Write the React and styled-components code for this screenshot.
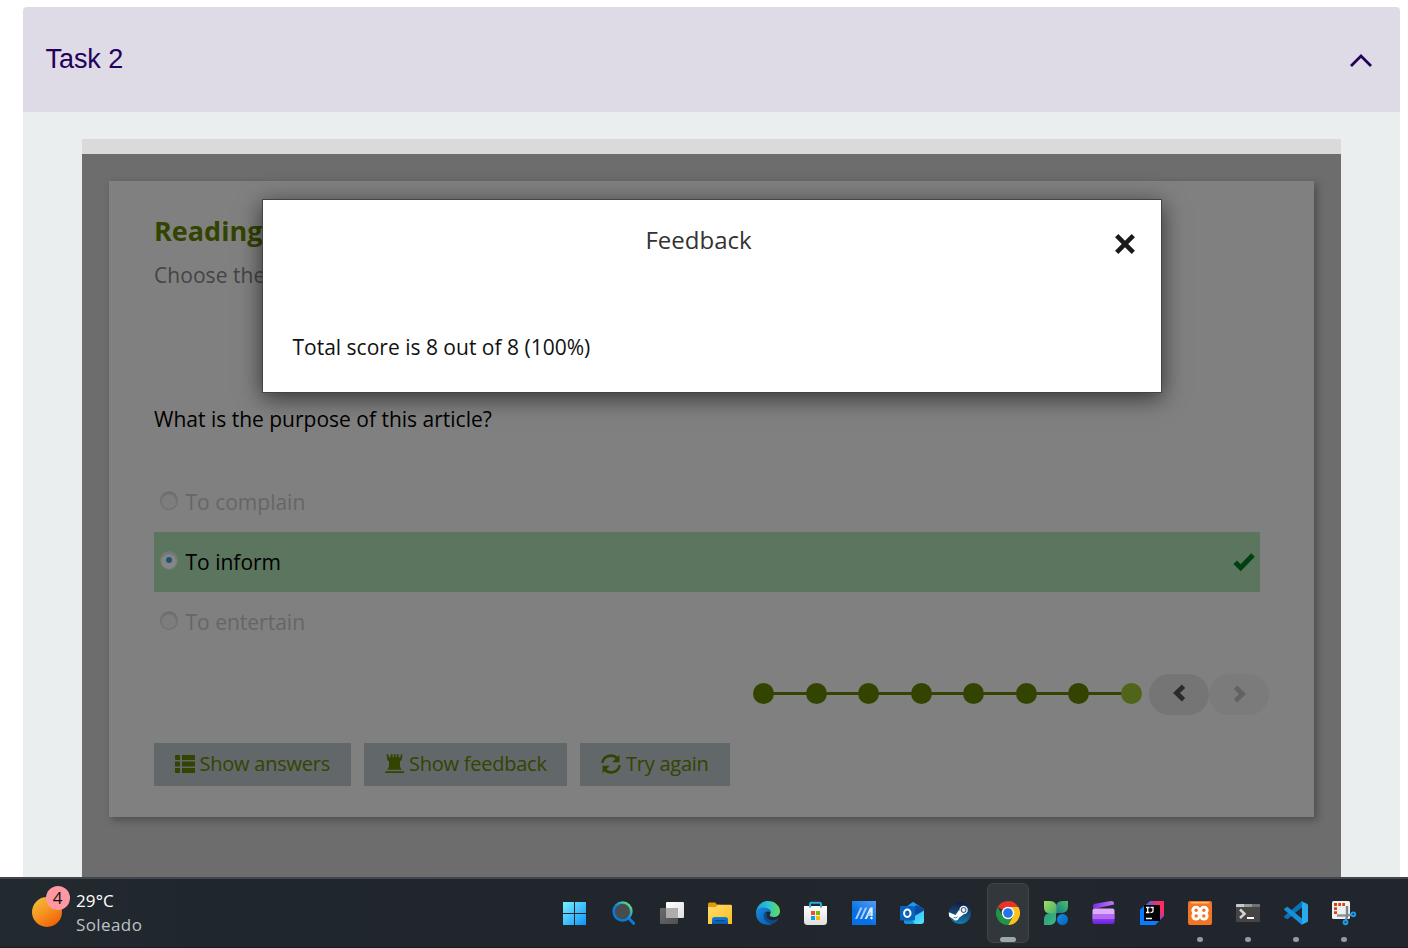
import React from "react";
import styled, { createGlobalStyle } from "styled-components";

const GlobalStyle = createGlobalStyle`
  * { box-sizing: border-box; }
  body { margin: 0; background: #fff; overflow: hidden; font-family: "Open Sans", "Noto Sans", sans-serif; }
  button { border: 0; padding: 0; margin: 0; font: inherit; background: none; }
  h1, h2, h3, p, ul { margin: 0; padding: 0; list-style: none; font-weight: 400; }
  svg { display: block; overflow: visible; flex: none; }
`;

const Screen = styled.div`
  display: flex;
  flex-direction: column;
  width: 1408px;
  height: 948px;
  overflow: hidden;
`;
const Page = styled.main`
  flex: 1;
  min-height: 0;
  display: flex;
  flex-direction: column;
  padding: 7px 8px 0 23px;
`;
const AccordionHeader = styled.header`
  height: 105px;
  flex: none;
  display: flex;
  align-items: center;
  justify-content: space-between;
  padding: 0 27px 0 22.5px;
  background: #dedbe6;
  border-radius: 4px 4px 0 0;
  color: #23005b;
`;
const AccordionTitle = styled.h2`
  font: 27px/32px "Liberation Sans", Arial, sans-serif;
  letter-spacing: -0.05px;
  padding-bottom: 2px;
`;
const AccordionBody = styled.div`
  flex: 1;
  min-height: 0;
  display: flex;
  flex-direction: column;
  padding: 27px 59px 0;
  background: #eaeeef;
`;
const FrameTop = styled.div`
  height: 15px;
  flex: none;
  background: #dadada;
`;
const Stage = styled.section`
  position: relative;
  flex: 1;
  padding: 27px;
  background: #6d6d6d;
`;
const Card = styled.article`
  height: 636px;
  padding: 32px 45px 0;
  background: #808080;
  box-shadow: 3px 3px 8px rgba(0, 0, 0, 0.3);
`;
const Title = styled.h1`
  font-size: 27px;
  line-height: 36px;
  font-weight: 700;
  color: #334400;
`;
const Subtitle = styled.p`
  margin-top: 11px;
  font-size: 21px;
  line-height: 30px;
  letter-spacing: 0.05px;
  color: #444;
`;
const Question = styled.p`
  margin-top: 114px;
  font-size: 21px;
  line-height: 30px;
  color: #000;
`;
const Options = styled.ul`
  margin: 38px 9px 0 0;
`;
const Option = styled.li`
  display: flex;
  align-items: center;
  height: 60px;
  padding: 0 5px 0 6px;
  font-size: 21px;
  line-height: 30px;
  background: ${(p) => (p.$correct ? "#5b755f" : "transparent")};
  color: ${(p) => (p.$correct ? "#000" : "#666")};
`;
const OptionLabel = styled.span`
  flex: 1;
  padding-left: 7.5px;
`;
const Radio = styled.span`
  display: flex;
  align-items: center;
  justify-content: center;
  width: 18px;
  height: 19px;
  margin-bottom: 4px;
  border-radius: 50%;
  border: 1px solid ${(p) => (p.$on ? "#6c7b70" : "#6e6e6e")};
  box-shadow: inset 0 2px 2px rgba(0, 0, 0, 0.14);
  background: ${(p) => (p.$on ? "#858787" : "#7d7d7d")};
  &::after {
    content: "";
    width: 6px;
    height: 6px;
    border-radius: 50%;
    background: ${(p) => (p.$on ? "#1d5375" : "transparent")};
  }
`;
const Progress = styled.nav`
  display: flex;
  justify-content: flex-end;
  align-items: center;
  margin-top: 22px;
  height: 41px;
`;
const Steps = styled.div`
  display: flex;
  align-items: center;
  width: 389px;
  margin-right: 7px;
  margin-bottom: 2px;
`;
const Step = styled.span`
  width: 21px;
  height: 21px;
  flex: none;
  border-radius: 50%;
  background: ${(p) => (p.$current ? "#50641a" : "#334400")};
`;
const StepLine = styled.span`
  flex: 1;
  height: 3px;
  margin: 0 -1px;
  background: #334400;
`;
const PagerButton = styled.button`
  display: flex;
  align-items: center;
  justify-content: center;
  width: 60px;
  height: 41px;
  padding-bottom: ${(p) => (p.$disabled ? 2 : 3)}px;
  border-radius: 21px;
  background: ${(p) => (p.$disabled ? "#7b7b7b" : "#757575")};
  color: ${(p) => (p.$disabled ? "#626262" : "#2b2b2b")};
`;
const Actions = styled.div`
  display: flex;
  gap: 13px;
  margin-top: 28px;
`;
const ActionButton = styled.button`
  display: flex;
  align-items: center;
  gap: ${(p) => p.$gap || 4.5}px;
  width: ${(p) => p.$width}px;
  height: 43px;
  padding: 0 0 2px 21px;
  background: #626769;
  color: #334400;
  font-size: 20px;
  line-height: 28px;
  letter-spacing: -0.24px;
  white-space: nowrap;
`;
const Dialog = styled.div`
  position: absolute;
  left: 180px;
  top: 45px;
  width: 900px;
  height: 194px;
  border: 1px solid #444;
  background: #fff;
  box-shadow: 0 5px 22px rgba(0, 0, 0, 0.6);
`;
const DialogHeader = styled.div`
  display: flex;
  align-items: center;
  height: 80px;
  padding: 0 24px 0 21px;
`;
const DialogTitle = styled.h3`
  flex: 1;
  text-align: center;
  font-size: 24px;
  line-height: 32px;
  color: #333;
`;
const CloseButton = styled.button`
  display: flex;
  justify-content: center;
  width: 24px;
  padding-top: 8px;
`;
const DialogText = styled.p`
  padding: 52px 29.5px 0;
  font-size: 21px;
  line-height: 30px;
  color: #111;
`;
const Taskbar = styled.footer`
  flex: none;
  display: flex;
  justify-content: space-between;
  height: 71px;
  padding: 0 40px 0 32px;
  border-top: 2px solid #424549;
  border-bottom: 1px solid #1a1c20;
  background: linear-gradient(90deg, #232a2f 0, #20262e 200px, #20262b 620px, #22272e 1000px, #20252e 100%);
`;
const Weather = styled.div`
  display: flex;
  align-items: center;
  gap: 14px;
  height: 66px;
`;
const Sun = styled.div`
  position: relative;
  width: 30px;
  height: 30px;
  border-radius: 50%;
  background: linear-gradient(145deg, #ecc23a, #f79622 45%, #ef5e05 90%);
`;
const Badge = styled.span`
  position: absolute;
  left: 13.7px;
  top: -11px;
  width: 24px;
  height: 24px;
  border-radius: 50%;
  background: #ff98a2;
  color: #111;
  text-align: center;
  font: 17px/24px "Open Sans", sans-serif;
`;
const WeatherInfo = styled.div`
  padding-top: 2px;
`;
const WeatherText = styled.div`
  font-size: 17px;
  line-height: 24px;
  color: ${(p) => (p.$dim ? "#bfc2c4" : "#fff")};
  letter-spacing: ${(p) => (p.$dim ? "0.4px" : "0.1px")};
`;
const AppList = styled.div`
  display: flex;
  height: 68px;
`;
const AppSlot = styled.div`
  width: 48px;
  height: 68px;
  padding: 4px 3px;
`;
const AppTile = styled.div`
  display: flex;
  flex-direction: column;
  align-items: center;
  height: 60px;
  padding-top: ${(p) => (p.$active ? 17 : 18)}px;
  border-radius: 6px;
  border: ${(p) => (p.$active ? "1px solid #3e4448" : "0")};
  background: ${(p) => (p.$active ? "#32373b" : "transparent")};
`;
const Indicator = styled.span`
  flex: none;
  width: ${(p) => (p.$active ? 16 : 6)}px;
  height: 5px;
  margin-top: 12px;
  border-radius: 3px;
  background: ${(p) => (p.$active ? "#9ba8ac" : "#969a9d")};
`;

const Icon = ({ children }) => (
  <svg width="24" height="24" viewBox="0 0 24 24">{children}</svg>
);
const Gradient = ({ id, from, to, x1 = 0, y1 = 0, x2 = 1, y2 = 1 }) => (
  <linearGradient id={id} x1={x1} y1={y1} x2={x2} y2={y2}>
    <stop stopColor={from} />
    <stop offset="1" stopColor={to} />
  </linearGradient>
);

const WindowsIcon = () => (
  <Icon>
    <defs>
      <linearGradient id="win" gradientUnits="userSpaceOnUse" x1="-1" y1="1" x2="22" y2="24">
        <stop stopColor="#79eeff" /><stop offset="1" stopColor="#0d94f8" />
      </linearGradient>
    </defs>
    <path fill="url(#win)" d="M-1 1h11v11H-1zM11 1h11v11H11zM-1 13h11v11H-1zM11 13h11v11H11z" />
  </Icon>
);
const SearchIcon = () => (
  <Icon>
    <defs>
      <linearGradient id="srch" x1="1" y1="0" x2="0.2" y2="0.8">
        <stop offset="0.1" stopColor="#66e36f" /><stop offset="0.45" stopColor="#25a6c4" /><stop offset="0.75" stopColor="#087ade" />
      </linearGradient>
    </defs>
    <path d="M16.700 17.200 21.600 22.300" stroke="#0a7bdd" strokeWidth="3" strokeLinecap="round" />
    <circle cx="10.500" cy="10.500" r="8.900" fill="#474c4e" stroke="url(#srch)" strokeWidth="2.500" />
  </Icon>
);
const TaskViewIcon = () => (
  <Icon>
    <defs>
      <Gradient id="tv1" from="#fff" to="#dedede" />
      <Gradient id="tv2" from="#6b6b6b" to="#505050" />
    </defs>
    <rect x="6" y="1" width="18" height="16" rx="1" fill="url(#tv1)" />
    <rect x="0" y="7" width="18" height="16" rx="1" fill="url(#tv2)" />
    <path d="M6 7h11a1 1 0 0 1 1 1v9H6z" fill="#adadad" />
  </Icon>
);
const FolderIcon = () => (
  <Icon>
    <defs>
      <Gradient id="fold" from="#ffdd70" to="#fcbd1c" />
      <Gradient id="foldb" from="#1681da" to="#075ba9" x2={0} />
    </defs>
    <path d="M0 3q0-1.500 1.500-1.500H7l2.500 2.300H12V9H0z" fill="#e09b05" />
    <path d="M0 6h7.500L10 3.700h12.500Q24 3.700 24 5v18H0z" fill="url(#fold)" />
    <path d="M4 23v-4.500Q4 16 6.500 16h11q2.500 0 2.500 2.500V23z" fill="url(#foldb)" />
    <path d="M7 19.600h10" stroke="#06427e" strokeWidth="1" />
  </Icon>
);
const EdgeIcon = () => (
  <Icon>
    <defs>
      <linearGradient id="edge1" x1="0" y1="0.4" x2="1" y2="0.4">
        <stop stopColor="#169ddd" /><stop offset="0.5" stopColor="#2cc2d5" /><stop offset="1" stopColor="#65dd55" />
      </linearGradient>
      <Gradient id="edge2" from="#168ce0" to="#0c58a9" />
    </defs>
    <path d="M0 11C1 4 6 0 12 0c7 0 12 5 12 10 0 4-3 6-6.500 6-3 0-4.500-1-3.500-2.500 1.800-3-.2-6-4.500-6C5 7.500 1 9 0 12z" fill="url(#edge1)" />
    <path d="M0 12c.4-4 5-6 8.500-5.500 3 .4 5.600 2.200 5.600 4.500-4-2-6.600 1.500-5.600 5 1 4 5 6.500 8.500 6.500C15 23.700 13.500 24 12 24 5 24 0 19 0 12z" fill="url(#edge2)" />
    <path d="M8.500 11.500c-3 6 2 10 6 11.700 3-.3 6-2.200 7.800-5-.3-.4-.7-.2-1.300.1-5.500 2.200-12 0-10-6z" fill="#0c4c8e" />
  </Icon>
);
const StoreIcon = () => (
  <Icon>
    <defs><Gradient id="bag" from="#fff" to="#dfdfdf" x2={0} /></defs>
    <path d="M0 5h23v15.500Q23 24 19.500 24h-16Q0 24 0 20.500z" fill="url(#bag)" />
    <path d="M6 6.500V3q0-1.300 1.300-1.300h8.400Q17 1.700 17 3v3.500" fill="none" stroke="#24afe0" strokeWidth="2" />
    <path d="M7 10h4v4H7z" fill="#f25022" /><path d="M12 10h4v4h-4z" fill="#7fba00" />
    <path d="M7 15h4v4H7z" fill="#00a4ef" /><path d="M12 15h4v4h-4z" fill="#ffb900" />
  </Icon>
);
const AsusIcon = () => (
  <Icon>
    <defs>
      <linearGradient id="asus" x1="0.3" y1="1" x2="1" y2="0">
        <stop offset="0.3" stopColor="#0670e4" /><stop offset="1" stopColor="#529ef5" />
      </linearGradient>
    </defs>
    <path d="M0 0h24v24H0z" fill="url(#asus)" />
    <path d="M3 18 8.300 6.500h2.200L5.200 18zM7.800 18l5.300-11.500h2.200L10 18z" fill="#a9cffa" />
    <path d="M12.600 18 18.200 6.500h2.500V15h-2.300v-4.500L14.900 18z" fill="#e0effe" />
    <path d="M15 14.800 16.200 12.500h3v2.300z" fill="#a9cffa" />
    <circle cx="19.500" cy="17" r="1.200" fill="#fff" />
  </Icon>
);
const OutlookIcon = () => (
  <Icon>
    <defs><Gradient id="outl" from="#23b5f2" to="#55e3fc" /></defs>
    <path d="M4 7 13 1l11 7v12q0 2-2 2H7q-3 0-3-3z" fill="#1669c4" />
    <path d="M4 7.500 13 1l6 3.700L10 11z" fill="#1c9bea" />
    <path d="m16.500 4 6 3.500L24 9v3l-9 2-3-6z" fill="#0b49a0" />
    <path d="M24 9.500V20q0 3-3 3H7q-3 0-3-3l9-4z" fill="url(#outl)" />
    <path d="M4 18h7l4 5H7q-3 0-3-3z" fill="#1592dc" />
    <rect y="5" width="15" height="14.500" rx="1" fill="#0a62bd" />
    <ellipse cx="7.300" cy="12.200" rx="3.200" ry="3.700" fill="none" stroke="#fff" strokeWidth="2" />
  </Icon>
);
const SteamIcon = () => (
  <Icon>
    <defs>
      <Gradient id="steam" from="#141a40" to="#147cae" x1={0.5} x2={0.45} />
    </defs>
    <circle cx="12" cy="12" r="11" fill="url(#steam)" />
    <path d="M.9 11.300 7.500 14l3.500-5 4.500 4.500-4.500 3.300c-.6 3-4 3.700-5.700 1.200L1.400 15.800Q.3 13.500.9 11.300z" fill="#fff" />
    <circle cx="15.600" cy="9" r="4.200" fill="#fff" />
    <circle cx="15.600" cy="9" r="2.500" fill="#e8edf4" stroke="#33446c" strokeWidth="1" />
    <path d="M5.500 16.200q2.700 2 4.200-.7" fill="none" stroke="#3b6288" strokeWidth="0.800" />
  </Icon>
);
const ChromeIcon = () => (
  <Icon>
    <path d="M12 12 1.600 6A12 12 0 0 1 22.400 6z" fill="#e6352b" />
    <path d="M12 6h10.400A12 12 0 0 1 12 24l5.200-9z" fill="#fcc31c" />
    <path d="M1.600 6A12 12 0 0 0 12 24l5.200-9L12 17.500 6.800 15z" fill="#239447" />
    <circle cx="12" cy="12" r="6.200" fill="#fff" />
    <circle cx="12" cy="12" r="4.800" fill="#2374e8" />
  </Icon>
);
const CloverIcon = () => (
  <Icon>
    <defs>
      <Gradient id="cl1" from="#a2df5c" to="#43ad72" />
      <Gradient id="cl2" from="#4cc06e" to="#137b82" x1={1} x2={0} />
      <Gradient id="cl3" from="#279e78" to="#42b68b" />
      <Gradient id="cl4" from="#118fe4" to="#0761b8" />
    </defs>
    <path d="M24 0h-5.500Q12 0 12 6.500V12h5.500Q24 12 24 5.500z" fill="url(#cl2)" />
    <path d="M0 24h5.500Q12 24 12 17.500V12H6.500Q0 12 0 18.500z" fill="url(#cl3)" />
    <path d="M0 0h6q6.500 0 6.500 6.500v6H6Q0 12.500 0 6z" fill="url(#cl1)" />
    <circle cx="18.500" cy="18.500" r="5.500" fill="url(#cl4)" />
  </Icon>
);
const ClipchampIcon = () => (
  <Icon>
    <defs>
      <Gradient id="clip" from="#7930e4" to="#c078fa" y2={0} />
      <Gradient id="clip2" from="#aa5cf5" to="#6d20dc" x2={0} />
    </defs>
    <path d="M1 5Q1 3.200 3 2.800L19 0q3-.5 3 2.500v1L4 7.500H1z" fill="url(#clip)" />
    <rect x="0.500" y="12" width="22" height="11" rx="2" fill="url(#clip2)" />
    <path d="M.5 9.500q0-2 2-2h18q2 0 2 2V13H.5z" fill="#e0abff" />
    <path d="M.5 13h22v5H.5z" fill="#b269f4" />
  </Icon>
);
const IntellijIcon = () => (
  <Icon>
    <defs>
      <linearGradient id="ij" x1="0.1" y1="0.6" x2="1" y2="0.1">
        <stop offset="0.2" stopColor="#0878f6" /><stop offset="0.5" stopColor="#7553d4" /><stop offset="0.8" stopColor="#ff2c64" />
      </linearGradient>
    </defs>
    <path d="M10 0h14v15L15 24H0V9z" fill="url(#ij)" />
    <path d="M0 9 4 5v15h15l-4 4H0z" fill="#087cff" />
    <path d="M4 4h16v16H4z" fill="#000" />
    <path d="M6 6.500h3.500M7.700 6.500v5M6 11.500h3.500M10.500 6.500H13V10q0 1.500-2.500 1.500M6 17.500h6" fill="none" stroke="#fff" strokeWidth="1.300" />
  </Icon>
);
const XamppIcon = () => (
  <Icon>
    <rect width="24" height="24" rx="2" fill="#f37422" />
    <path d="M3 1h18v1.500H3z" fill="#ffb57d" />
    <g fill="#fff">
      <circle cx="8" cy="9.300" r="4.600" /><circle cx="16" cy="9.300" r="4.600" />
      <circle cx="8" cy="15" r="4.600" /><circle cx="16" cy="15" r="4.600" />
      <path d="M6 9h12v6H6z" />
    </g>
    <g fill="#f37422">
      <circle cx="8.200" cy="9.300" r="1.700" /><circle cx="15.800" cy="9.300" r="1.700" />
      <circle cx="8.200" cy="15" r="1.700" /><circle cx="15.800" cy="15" r="1.700" />
    </g>
  </Icon>
);
const TerminalIcon = () => (
  <Icon>
    <rect y="3" width="24" height="18" rx="1" fill="#454545" />
    <path d="M0 6V4q0-1 1-1h7v3z" fill="#c9c9c9" /><path d="M8 3h8v3H8z" fill="#999" /><path d="M16 3h7q1 0 1 1v2h-8z" fill="#707070" />
    <path d="m4 8.500 4.500 4.300L4 17" fill="none" stroke="#d5d5d5" strokeWidth="2.500" />
    <path d="M11 17h7" stroke="#fff" strokeWidth="2" />
  </Icon>
);
const CodeIcon = () => (
  <Icon>
    <path d="m18 0 .5 6L3.500 18.200.4 16.700Q-.5 16 .4 15z" fill="#0873b9" />
    <path d="M.4 7.400 3.500 5.800 18.500 18 18 24 .4 9Q-.5 8 .4 7.400z" fill="#168fd5" />
    <path d="m17 0 6 2.700q1 .5 1 1.500v15.600q0 1-1 1.500L17 24q1-.5 1-2V2q0-1.500-1-2z" fill="#2ba9ee" />
  </Icon>
);
const SnipIcon = () => (
  <Icon>
    <rect width="18" height="18" rx="1.500" fill="#eef1f1" />
    <path d="M2 2h3v3H2zM6.300 2H9v3H6.300zM10.300 2H13v3h-2.700zM2 6.300h3V9H2zM2 10.300h3V13H2z" fill="#dc3f10" />
    <path d="M5 14.500h10.500q1.500 0 3.500-1.200" fill="none" stroke="#8c959c" strokeWidth="2.400" />
    <path d="M15 5v10q0 2-1.300 4" fill="none" stroke="#7d868e" strokeWidth="2.400" />
    <circle cx="21.300" cy="13.300" r="1.900" fill="#17384d" stroke="#18a0e8" strokeWidth="1.900" />
    <circle cx="13.500" cy="21.300" r="1.900" fill="#17384d" stroke="#18a0e8" strokeWidth="1.900" />
  </Icon>
);

const ListGlyph = () => (
  <svg width="20" height="18" viewBox="0 0 20 18" fill="currentColor">
    <path d="M.7 0H5v5H.7Q0 5 0 4.300V.7Q0 0 .7 0zM7 0h12.300q.7 0 .7.700v3.600q0 .7-.7.700H7zM0 6.500h5v5H0zM7 6.500h13v5H7zM0 13h5v5H.7Q0 18 0 17.300zM7 13h13v4.300q0 .7-.7.700H7z" />
  </svg>
);
const TowerGlyph = () => (
  <svg width="19" height="19" viewBox="0 0 19 19" fill="currentColor">
    <path d="M1.500.5 3.300.2l.6 3h1.700V.2h1.900v3h1.200V.2h1.800v3h1.200V.2h1.900v3h1.700l.6-3 1.600.3-.8 5.400-1.700 1.400v4.900q.5 2 1.800 3.600H2.200q1.300-1.600 1.800-3.600V7.300L2.300 5.900zM.3 17.200H19V19H.3z" />
  </svg>
);
const RefreshGlyph = () => (
  <svg width="20" height="20" viewBox="0 0 20 20">
    <path d="M1.300 8.700C2.200 4 6 1.600 10 1.600c2.600 0 4.600 1 6 2.600M18.700 11.300C17.800 16 14 18.400 10 18.400c-2.600 0-4.600-1-6-2.600" fill="none" stroke="currentColor" strokeWidth="2.700" />
    <path d="M18.400.8v7.400h-7.200zM1.600 19.200v-7.400h7.200z" fill="currentColor" />
  </svg>
);
const CheckGlyph = () => (
  <svg width="22" height="18" viewBox="0 0 22 18">
    <path d="M2.200 9.300 7.700 14.800 20 2" fill="none" stroke="#00410f" strokeWidth="5" />
  </svg>
);
const Chevron = ({ right }) => (
  <svg width="13" height="18" viewBox="0 0 13 18">
    <path d={right ? "M2.500 2.300 9.500 9l-7 6.700" : "M10.500 2.300 3.500 9l7 6.700"} fill="none" stroke="currentColor" strokeWidth="4.800" />
  </svg>
);

const steps = [1, 2, 3, 4, 5, 6, 7, 8];
const apps = [
  { icon: WindowsIcon }, { icon: SearchIcon }, { icon: TaskViewIcon }, { icon: FolderIcon },
  { icon: EdgeIcon }, { icon: StoreIcon }, { icon: AsusIcon }, { icon: OutlookIcon },
  { icon: SteamIcon }, { icon: ChromeIcon, active: true, open: true }, { icon: CloverIcon },
  { icon: ClipchampIcon }, { icon: IntellijIcon }, { icon: XamppIcon, open: true },
  { icon: TerminalIcon, open: true }, { icon: CodeIcon, open: true }, { icon: SnipIcon, open: true },
];

export default function App() {
  return (
    <Screen>
      <GlobalStyle />
      <Page>
        <AccordionHeader>
          <AccordionTitle>Task 2</AccordionTitle>
          <svg width="24" height="16" viewBox="0 0 24 16">
            <path d="m2 14 10-10 10 10" fill="none" stroke="#23005b" strokeWidth="2.800" />
          </svg>
        </AccordionHeader>
        <AccordionBody>
          <FrameTop />
          <Stage>
            <Card>
              <Title>Reading</Title>
              <Subtitle>Choose the</Subtitle>
              <Question>What is the purpose of this article?</Question>
              <Options>
                <Option><Radio /><OptionLabel>To complain</OptionLabel></Option>
                <Option $correct><Radio $on /><OptionLabel>To inform</OptionLabel><CheckGlyph /></Option>
                <Option><Radio /><OptionLabel>To entertain</OptionLabel></Option>
              </Options>
              <Progress>
                <Steps>
                  {steps.map((n) => (
                    <React.Fragment key={n}>
                      {n > 1 && <StepLine />}
                      <Step $current={n === 8} />
                    </React.Fragment>
                  ))}
                </Steps>
                <PagerButton><Chevron /></PagerButton>
                <PagerButton $disabled><Chevron right /></PagerButton>
              </Progress>
              <Actions>
                <ActionButton $width={197}><ListGlyph />Show answers</ActionButton>
                <ActionButton $width={203} $gap={5}><TowerGlyph />Show feedback</ActionButton>
                <ActionButton $width={150} $gap={5}><RefreshGlyph />Try again</ActionButton>
              </Actions>
            </Card>
            <Dialog role="dialog">
              <DialogHeader>
                <DialogTitle>Feedback</DialogTitle>
                <CloseButton>
                  <svg width="20" height="20" viewBox="0 0 20 20">
                    <path d="m1.700 1.700 16.600 16.600M18.300 1.700 1.700 18.300" stroke="#1a1a1a" strokeWidth="4.600" />
                  </svg>
                </CloseButton>
              </DialogHeader>
              <DialogText>Total score is 8 out of 8 (100%)</DialogText>
            </Dialog>
          </Stage>
        </AccordionBody>
      </Page>
      <Taskbar>
        <Weather>
          <Sun><Badge>4</Badge></Sun>
          <WeatherInfo>
            <WeatherText>29°C</WeatherText>
            <WeatherText $dim>Soleado</WeatherText>
          </WeatherInfo>
        </Weather>
        <AppList>
          {apps.map(({ icon: AppIcon, active, open }, i) => (
            <AppSlot key={i}>
              <AppTile $active={active}>
                <AppIcon />
                {open && <Indicator $active={active} />}
              </AppTile>
            </AppSlot>
          ))}
        </AppList>
      </Taskbar>
    </Screen>
  );
}
